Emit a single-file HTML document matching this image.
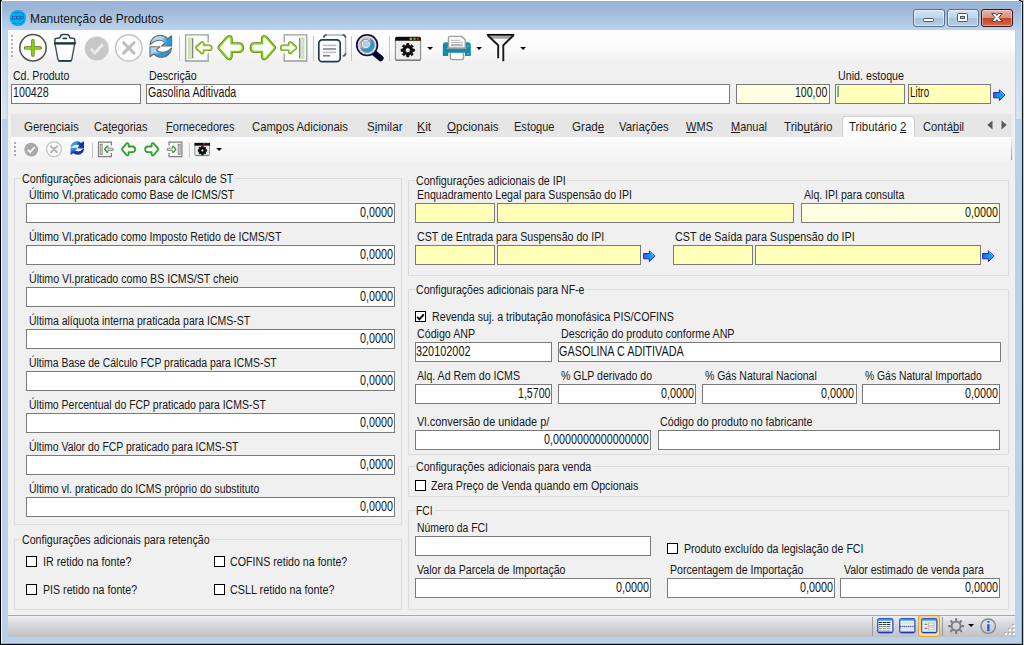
<!DOCTYPE html>
<html lang="pt-BR"><head><meta charset="utf-8"><title>Manutenção de Produtos</title>
<style>
html,body{margin:0;padding:0}
body{width:1024px;height:645px;overflow:hidden;background:#b9d1ea;position:relative;font-family:"Liberation Sans",sans-serif}
#w{position:absolute;left:0;top:0;width:1024px;height:645px;overflow:hidden;background:#b9d1ea}
#w>*{position:absolute}
#tb{left:0;top:0;width:1024px;height:30px;background:linear-gradient(#98b3d4 0,#9cb6d7 8px,#b0c9e6 22px,#bdd3ec 30px)}
#topline{left:2px;top:0;width:1017px;height:1px;background:#fdfdfd}
#c1{left:1019px;top:0;width:2px;height:1px;background:#111}
#c2{left:1021px;top:1px;width:1px;height:1px;background:#111}
#c3{left:0;top:0;width:2px;height:1px;background:#222}
#lblack{left:0;top:0;width:1px;height:645px;background:#000}
#lwhite{left:1px;top:2px;width:1px;height:641px;background:#f4f8fc}
#rcyan{left:1021px;top:2px;width:1px;height:641px;background:linear-gradient(#a8eefb,#7fe4f8 40%,#45dcf8)}
#rblack{left:1022px;top:1px;width:1px;height:644px;background:#10181c}
#rgray{left:1023px;top:0;width:1px;height:645px;background:#c6c6c6}
#bcyan{left:1px;top:643px;width:1021px;height:1px;background:#35d6f0}
#bblack{left:0;top:644px;width:1023px;height:1px;background:#000}
#refl1{left:2px;top:30px;width:5px;height:89px;background:linear-gradient(rgba(255,255,255,.08),rgba(255,255,255,.42))}
#refl2{left:1016px;top:30px;width:5px;height:89px;background:linear-gradient(rgba(255,255,255,.08),rgba(255,255,255,.42))}
#client{left:8px;top:30px;width:1007px;height:607px;background:#f0f0f0}
#toolbar{left:8px;top:30px;width:1007px;height:34px;background:linear-gradient(#f6f6f6 0,#fefefe 2px,#fcfcfc 45%,#f4f4f4 80%,#f0f0f0 100%)}
.wb{top:9px;height:16px;border:1px solid #5d6f8a;border-radius:3px;background:linear-gradient(#cfe0f3 0,#c0d5ee 48%,#a8c2e0 52%,#b5cde9 100%);box-shadow:inset 0 0 0 1px rgba(255,255,255,.55)}
.wb.cl{border-color:#43141a;background:linear-gradient(#eab0a2 0,#dd8f7e 48%,#c44528 52%,#cf6a4b 100%);box-shadow:inset 0 0 0 1px rgba(255,255,255,.4)}
.wb svg{position:absolute;left:0;top:0}
.t{white-space:nowrap;color:#161616;transform-origin:0 0}
.s12_5{font-size:12.5px;line-height:14px}
.s13_5{font-size:13.5px;line-height:16px}
.s14{font-size:14px;line-height:16px}
.t u{text-decoration:underline;text-underline-offset:1px}
.bx{border:1px solid #7a7a7a}
.gb{border:1px solid #dcdcdc;border-radius:1px;box-sizing:border-box;width:0;height:0}
.gt{height:4px;background:#f0f0f0}
.cb{width:9px;height:9px;border:1px solid #000;background:#fff}
.cb svg{position:absolute;left:0;top:0}
.sep{width:1px;background:#c8c8c8}
.ic{overflow:visible}
#tabstrip{left:11px;top:114px;width:1001px;height:23px;background:#e6e6e6}
#acttab{left:842px;top:116px;width:71px;height:21px;border:1px solid #d0d0d0;border-bottom:none;border-radius:4px 4px 0 0;background:linear-gradient(#fff,#fafafa)}
#itb{left:11px;top:137px;width:1000px;height:24px;background:linear-gradient(#fcfcfc,#f3f3f3);border-radius:0 0 0 4px}
#itbr{left:1011px;top:138px;width:1px;height:22px;background:linear-gradient(#f0f0f0,#9a9a9a)}
#status{left:8px;top:615px;width:1007px;height:22px;background:linear-gradient(#a7a9ad 0,#a7a9ad 1px,#eceef0 1px,#d8dadd 40%,#bfc1c4 100%)}
#stsel{left:918px;top:615px;width:20px;height:20px;border:1px solid #e6a23c;border-top-color:#d8913a;border-radius:3px;background:linear-gradient(#fcd67e,#fde08e)}
</style></head>
<body><div id="w">
<div id="tb"></div>
<div id="c1"></div><div id="c2"></div><div id="c3"></div>
<div id="topline"></div><div id="lblack"></div><div id="lwhite"></div>
<div id="rcyan"></div><div id="rblack"></div><div id="rgray"></div>
<div id="bcyan"></div><div id="bblack"></div>
<div id="refl1"></div><div id="refl2"></div>
<div id="client"></div>
<div id="toolbar"></div>
<div class="wb" style="left:913px;width:30px"><svg width="30" height="16" viewBox="0 0 30 16"><rect x="9.5" y="8.5" width="10" height="3" rx="0.8" fill="#fff" stroke="#535666" stroke-width="1"/></svg></div>
<div class="wb" style="left:947px;width:30px"><svg width="30" height="16" viewBox="0 0 30 16"><rect x="9.5" y="3.5" width="10" height="8" rx="1" fill="#fff" stroke="#535666" stroke-width="1"/><rect x="12.5" y="6.5" width="4" height="2" fill="#a9c0dc" stroke="#535666" stroke-width="1"/></svg></div>
<div class="wb cl" style="left:981px;width:30px"><svg width="30" height="16" viewBox="0.6 0 30 16"><path d="M10.3 3.5 L14 3.5 L15.5 5.4 L17 3.5 L20.7 3.5 L17.5 7.5 L20.7 11.5 L17 11.5 L15.5 9.6 L14 11.5 L10.3 11.5 L13.5 7.5 Z" fill="#fff" stroke="#4d4a5c" stroke-width="1" stroke-linejoin="round"/></svg></div>
<svg class="ic" style="left:9px;top:10px" width="18" height="17" viewBox="0 0 18 17"><circle cx="8.9" cy="8.1" r="8.2" fill="#08aef0"/>
<path d="M3.8 2.7 H11.4 A3.6 3.6 0 0 1 15 6.1 M14.6 10.6 A3.6 3.6 0 0 1 11.2 13.4 H3.8" fill="none" stroke="#1a80cc" stroke-width="1"/>
<text x="2.3" y="10.1" font-family="Liberation Sans, sans-serif" font-size="5.8" font-weight="bold" font-style="italic" fill="#1560b4" textLength="12.6" lengthAdjust="spacingAndGlyphs">ERP</text></svg>
<span class="t s13_5" style="left:29.70px;top:10.52px;transform:scaleX(0.8863)">Manutenção de Produtos</span>
<svg class="ic" style="left:11px;top:35px" width="3" height="23" viewBox="0 0 3 23"><rect x="0" y="0" width="2" height="2" fill="#b4b4b4"/><rect x="0" y="4" width="2" height="2" fill="#b4b4b4"/><rect x="0" y="8" width="2" height="2" fill="#b4b4b4"/><rect x="0" y="12" width="2" height="2" fill="#b4b4b4"/><rect x="0" y="16" width="2" height="2" fill="#b4b4b4"/><rect x="0" y="20" width="2" height="2" fill="#b4b4b4"/></svg>
<svg class="ic" style="left:18px;top:33px" width="30" height="30" viewBox="0 0 30 30"><circle cx="15" cy="14.8" r="13.2" fill="#fcfcfc" stroke="#505050" stroke-width="1.5"/>
<path d="M7.6 14.9 H22.2 M14.9 7.6 V22.2" stroke="#55701a" stroke-width="3.3" stroke-linecap="round" fill="none"/>
<path d="M7.8 14.9 H22 M14.9 7.8 V22" stroke="#8ed000" stroke-width="2" stroke-linecap="round" fill="none"/></svg>
<svg class="ic" style="left:52px;top:33px" width="26" height="30" viewBox="0 0 26 30"><path d="M3 10.8 L5.9 26.3 Q6.2 27.8 7.8 27.8 H17.9 Q19.5 27.8 19.8 26.3 L22.7 10.8 Z" fill="#fdfdfd" stroke="#40545f" stroke-width="1.4"/>
<path d="M6.9 27.8 H18.8" stroke="#1d3644" stroke-width="1.7" stroke-linecap="round"/>
<path d="M2.8 10.3 V7.4 Q2.8 5.3 5 5.3 H6.4 Q8 5.3 8.2 3.9 Q8.6 1.5 11 1.5 H14.7 Q17.1 1.5 17.5 3.9 Q17.7 5.3 19.3 5.3 H20.7 Q22.9 5.3 22.9 7.4 V10.3 Z" fill="#fdfdfd" stroke="#2b4350" stroke-width="1.4"/>
<path d="M10.6 5.4 H15.1" stroke="#1d3644" stroke-width="1.6"/>
<path d="M2.1 10.3 H23.6" stroke="#1a3442" stroke-width="2"/></svg>
<svg class="ic" style="left:84px;top:36px" width="26" height="26" viewBox="0 0 26 26"><circle cx="12.8" cy="12.4" r="12" fill="#c8c8c8"/>
<path d="M6.8 12.8 L11 17 L19 8.2" fill="none" stroke="#ececec" stroke-width="2.8"/></svg>
<svg class="ic" style="left:114px;top:33px" width="30" height="30" viewBox="0 0 30 30"><circle cx="14.8" cy="14.9" r="13.2" fill="#fcfcfc" stroke="#c4c4c4" stroke-width="1.5"/>
<path d="M9.6 9.7 L20 20.1 M20 9.7 L9.6 20.1" stroke="#bdbdbd" stroke-width="3" stroke-linecap="round" fill="none"/></svg>
<svg class="ic" style="left:148px;top:34px" width="26" height="26" viewBox="0 0 26 26"><defs>
<linearGradient id="rg1b" x1="0" y1="0" x2="1" y2="0"><stop offset="0" stop-color="#b4d3f2"/><stop offset="0.55" stop-color="#b4d3f2"/><stop offset="0.8" stop-color="#1e9ddb"/><stop offset="1" stop-color="#1e9ddb"/></linearGradient>
<linearGradient id="rg2b" x1="0" y1="0" x2="0.6" y2="1"><stop offset="0" stop-color="#b4d3f2"/><stop offset="0.45" stop-color="#b4d3f2"/><stop offset="0.7" stop-color="#1e9ddb"/><stop offset="1" stop-color="#1e9ddb"/></linearGradient>
</defs>
<g transform="scale(1)">
<path d="M2 10.8 C2.5 5 7 1.4 12 1.4 C15.5 1.4 18 2.8 19.6 4.8 L23.6 1.8 L23.6 12 L13.6 12 L17.2 9 C15.9 7.4 14 6.3 11.6 6.3 C8 6.3 4.6 8.2 2 10.8 Z" fill="url(#rg1b)" stroke="#6a6a6a" stroke-width="1.1" stroke-linejoin="round"/>
<path d="M23.6 13.9 C23.1 19.7 18.6 23.3 13.6 23.3 C10.1 23.3 7.6 21.9 6 19.9 L2 22.9 L2 12.8 L12 12.8 L8.4 15.8 C9.7 17.4 11.6 18.4 14 18.4 C17.6 18.4 21 16.5 23.6 13.9 Z" fill="url(#rg2b)" stroke="#6a6a6a" stroke-width="1.1" stroke-linejoin="round"/>
</g></svg>
<div class="sep" style="left:179px;top:36px;height:25px"></div>
<svg class="ic" style="left:184px;top:33px" width="30" height="30" viewBox="0 0 30 30"><path d="M24.2 9.4 V1.8 H1.6 V28 H24.2 V20.4" fill="#fbfbfb" stroke="#949ea7" stroke-width="1.3"/>
<rect x="4.6" y="5.2" width="4" height="20" fill="#dedede" stroke="#bce694" stroke-width="1.2"/>
<path d="M8.7 5.4 V25" stroke="#707070" stroke-width="1"/>
<path d="M12.6 13.9 L17.2 9.9 Q18.4 9 19 9.8 Q19.4 10.2 19.4 11 L19.4 12.5 L25.2 12.5 Q27.4 12.5 27.4 14.75 Q27.4 17 25.2 17 L19.4 17 L19.4 18.4 Q19.4 19.2 19 19.6 Q18.4 20.4 17.2 19.5 L12.6 15.5 Q11.8 14.7 12.6 13.9 Z" fill="#fdfdfd" stroke="#647434" stroke-width="2.2" stroke-linejoin="round"/>
<path d="M12.6 13.9 L17.2 9.9 Q18.4 9 19 9.8 Q19.4 10.2 19.4 11 L19.4 12.5 L25.2 12.5 Q27.4 12.5 27.4 14.75 Q27.4 17 25.2 17 L19.4 17 L19.4 18.4 Q19.4 19.2 19 19.6 Q18.4 20.4 17.2 19.5 L12.6 15.5 Q11.8 14.7 12.6 13.9 Z" fill="#fdfdfd" stroke="#8ad21a" stroke-width="1.3" stroke-linejoin="round"/></svg>
<svg class="ic" style="left:216px;top:34px" width="30" height="28" viewBox="0 0 30 28"><path d="M3.6 12.5 L11.4 3.5 Q13 1.8 14.5 3 Q15.2 3.6 15.2 5 L15.2 9.7 L22.4 9.7 Q26.5 9.7 26.5 13.65 Q26.5 17.6 22.4 17.6 L15.2 17.6 L15.2 22.3 Q15.2 23.7 14.5 24.3 Q13 25.5 11.4 23.8 L3.6 14.8 Q2.6 13.65 3.6 12.5 Z" fill="#fdfdfd" stroke="#5d6e2c" stroke-width="3" stroke-linejoin="round"/>
<path d="M3.6 12.5 L11.4 3.5 Q13 1.8 14.5 3 Q15.2 3.6 15.2 5 L15.2 9.7 L22.4 9.7 Q26.5 9.7 26.5 13.65 Q26.5 17.6 22.4 17.6 L15.2 17.6 L15.2 22.3 Q15.2 23.7 14.5 24.3 Q13 25.5 11.4 23.8 L3.6 14.8 Q2.6 13.65 3.6 12.5 Z" fill="#fdfdfd" stroke="#86cf14" stroke-width="1.8" stroke-linejoin="round"/></svg>
<svg class="ic" style="left:248px;top:34px" width="30" height="28" viewBox="0 0 30 28"><g transform="translate(29.6,0) scale(-1,1)">
<path d="M3.6 12.5 L11.4 3.5 Q13 1.8 14.5 3 Q15.2 3.6 15.2 5 L15.2 9.7 L22.4 9.7 Q26.5 9.7 26.5 13.65 Q26.5 17.6 22.4 17.6 L15.2 17.6 L15.2 22.3 Q15.2 23.7 14.5 24.3 Q13 25.5 11.4 23.8 L3.6 14.8 Q2.6 13.65 3.6 12.5 Z" fill="#fdfdfd" stroke="#5d6e2c" stroke-width="3" stroke-linejoin="round"/>
<path d="M3.6 12.5 L11.4 3.5 Q13 1.8 14.5 3 Q15.2 3.6 15.2 5 L15.2 9.7 L22.4 9.7 Q26.5 9.7 26.5 13.65 Q26.5 17.6 22.4 17.6 L15.2 17.6 L15.2 22.3 Q15.2 23.7 14.5 24.3 Q13 25.5 11.4 23.8 L3.6 14.8 Q2.6 13.65 3.6 12.5 Z" fill="#fdfdfd" stroke="#86cf14" stroke-width="1.8" stroke-linejoin="round"/>
</g></svg>
<svg class="ic" style="left:279px;top:33px" width="30" height="30" viewBox="0 0 30 30"><g transform="translate(29.4,0) scale(-1,1)">
<path d="M24.2 9.4 V1.8 H1.6 V28 H24.2 V20.4" fill="#fbfbfb" stroke="#949ea7" stroke-width="1.3"/>
<rect x="4.6" y="5.2" width="4" height="20" fill="#dedede" stroke="#bce694" stroke-width="1.2"/>
<path d="M8.7 5.4 V25" stroke="#707070" stroke-width="1"/>
<path d="M12.6 13.9 L17.2 9.9 Q18.4 9 19 9.8 Q19.4 10.2 19.4 11 L19.4 12.5 L25.2 12.5 Q27.4 12.5 27.4 14.75 Q27.4 17 25.2 17 L19.4 17 L19.4 18.4 Q19.4 19.2 19 19.6 Q18.4 20.4 17.2 19.5 L12.6 15.5 Q11.8 14.7 12.6 13.9 Z" fill="#fdfdfd" stroke="#647434" stroke-width="2.2" stroke-linejoin="round"/>
<path d="M12.6 13.9 L17.2 9.9 Q18.4 9 19 9.8 Q19.4 10.2 19.4 11 L19.4 12.5 L25.2 12.5 Q27.4 12.5 27.4 14.75 Q27.4 17 25.2 17 L19.4 17 L19.4 18.4 Q19.4 19.2 19 19.6 Q18.4 20.4 17.2 19.5 L12.6 15.5 Q11.8 14.7 12.6 13.9 Z" fill="#fdfdfd" stroke="#8ad21a" stroke-width="1.3" stroke-linejoin="round"/>
</g></svg>
<div class="sep" style="left:313px;top:36px;height:25px"></div>
<svg class="ic" style="left:317px;top:33px" width="30" height="30" viewBox="0 0 30 30"><path d="M6.6 5 Q6.6 1.9 9.6 1.9 H25.6 Q28.6 1.9 28.6 5 V20 Q28.6 23 25.6 23" fill="none" stroke="#a9b3ba" stroke-width="1.5"/>
<path d="M6.7 4.6 Q6.9 2 9.6 1.9 M25.6 1.9 Q28.4 2 28.6 4.8 M28.6 20.2 Q28.4 22.8 25.8 23" fill="none" stroke="#555a5e" stroke-width="1.6"/>
<rect x="1.8" y="6.8" width="21.4" height="21.8" rx="3.4" fill="#fbfbfb" stroke="#243c4a" stroke-width="1.7"/>
<path d="M6 12.4 H19" stroke="#b5c0c8" stroke-width="1.5"/>
<path d="M6 16 H19" stroke="#6c7378" stroke-width="1.4"/>
<path d="M6 19.4 H19" stroke="#b5c0c8" stroke-width="1.5"/>
<path d="M6 22.8 H13.2" stroke="#6c7378" stroke-width="1.4"/></svg>
<div class="sep" style="left:351px;top:36px;height:25px"></div>
<svg class="ic" style="left:355px;top:33px" width="30" height="30" viewBox="0 0 30 30"><defs><clipPath id="scp"><circle cx="12.1" cy="12.1" r="7.5"/></clipPath></defs>
<path d="M19.6 20.2 L25.6 25.2" stroke="#05052e" stroke-width="6" stroke-linecap="round"/>
<circle cx="12.1" cy="12.1" r="10.4" fill="#c2c2c2" stroke="#0a0a3a" stroke-width="1.6"/>
<circle cx="12.1" cy="12.1" r="8.1" fill="none" stroke="#f2f2f2" stroke-width="1.3"/>
<circle cx="12.1" cy="12.1" r="7.5" fill="#dcdce0"/>
<g clip-path="url(#scp)">
<path d="M4 13.6 Q7 16.4 11.4 15.6 Q15.4 14.6 15.8 10.4 Q16 8 14.6 6 L21 5 V21 H4 Z" fill="#1e9cd8"/>
<circle cx="10.8" cy="11" r="4.7" fill="#e6e6ea" stroke="#8e8e92" stroke-width="1.1"/>
<path d="M8 8 H13.8 V13.6 H11.6 L10.4 14.8 L10.2 13.6 H8 Z" fill="#a9d2f2"/>
</g>
<circle cx="12.1" cy="12.1" r="7.5" fill="none" stroke="#9a9a9a" stroke-width="0.7"/></svg>
<div class="sep" style="left:389px;top:36px;height:25px"></div>
<svg class="ic" style="left:394px;top:35px" width="28" height="27" viewBox="0 0 28 27"><path d="M1.4 3.4 Q1.4 2 3 2 H25 Q26.6 2 26.6 3.4 V23.2 Q26.6 25.4 24.4 25.4 H3.6 Q1.4 25.4 1.4 23.2 Z" fill="#eceeee" stroke="#8e8e8e" stroke-width="1.1"/>
<path d="M2.4 25.3 H25.6" stroke="#7c7c7c" stroke-width="1.5" stroke-linecap="round"/>
<path d="M1.2 5.7 V3.4 Q1.2 1.9 2.9 1.9 H25.1 Q26.8 1.9 26.8 3.4 V5.7 Z" fill="#0b0b0b"/>
<circle cx="16.9" cy="3.8" r="1.35" fill="#f39a1d"/><circle cx="20.5" cy="3.8" r="1.35" fill="#2fbf3a"/><circle cx="24" cy="3.8" r="1.35" fill="#e8191f"/>
<path d="M18.65 13.99 L20.52 14.19 L20.52 16.21 L18.65 16.41 L18.08 17.78 L19.27 19.24 L17.84 20.67 L16.38 19.48 L15.01 20.05 L14.81 21.92 L12.79 21.92 L12.59 20.05 L11.22 19.48 L9.76 20.67 L8.33 19.24 L9.52 17.78 L8.95 16.41 L7.08 16.21 L7.08 14.19 L8.95 13.99 L9.52 12.62 L8.33 11.16 L9.76 9.73 L11.22 10.92 L12.59 10.35 L12.79 8.48 L14.81 8.48 L15.01 10.35 L16.38 10.92 L17.84 9.73 L19.27 11.16 L18.08 12.62 Z M16.30 15.20 A2.5 2.5 0 1 0 11.30 15.20 A2.5 2.5 0 1 0 16.30 15.20 Z" fill="#0d0d0d" fill-rule="evenodd" stroke="#0d0d0d" stroke-width="0.8" stroke-linejoin="round"/></svg>
<svg class="ic" style="left:427px;top:47px" width="7" height="4" viewBox="0 0 7 4"><path d="M0.2 0 H6 L3.1 3.1 Z" fill="#000"/></svg>
<svg class="ic" style="left:442px;top:35px" width="30" height="26" viewBox="0 0 30 26"><path d="M0.8 10.6 Q0.8 7.3 4.1 7.3 H25.5 Q28.8 7.3 28.8 10.6 V21.1 H23 V17.8 H6.2 V21.1 H0.8 Z" fill="#118ca6"/>
<path d="M6.5 13.2 V2.8 Q6.5 1.4 7.9 1.4 H19.4 L23.3 4.8 V13.2 Z" fill="#fbfbfb" stroke="#a2a2a2" stroke-width="1.4" stroke-linejoin="round"/>
<path d="M9 5.3 H18 M9 7.5 H20.6" stroke="#b0b0b0" stroke-width="0.9"/>
<path d="M9 9.9 H20.6" stroke="#b4b4b4" stroke-width="2"/>
<path d="M9 12 H20.6" stroke="#c4c4c4" stroke-width="0.8"/>
<path d="M5 13.4 H24.6" stroke="#929ca2" stroke-width="1.4"/>
<rect x="25" y="10.4" width="2.2" height="1.5" fill="#8aa4ae"/>
<rect x="25" y="18.3" width="2.2" height="1.2" fill="#8aa4ae"/>
<path d="M8.3 18 V22.6 Q8.3 24.6 10.3 24.6 H19.5 Q21.5 24.6 21.5 22.6 V18" fill="#fcfcfc" stroke="#9c9c9c" stroke-width="1.4"/></svg>
<svg class="ic" style="left:476px;top:47px" width="7" height="4" viewBox="0 0 7 4"><path d="M0.2 0 H6 L3.1 3.1 Z" fill="#000"/></svg>
<svg class="ic" style="left:486px;top:33px" width="30" height="30" viewBox="0 0 30 30"><path d="M1.4 1.8 H28 L17.6 12 V28 L12.2 25 V12 Z" fill="#fdfdfd"/>
<path d="M2.6 2.4 H26.8 L23.6 5.7 H5.8 Z" fill="#a2a2a2"/>
<path d="M0.9 1.8 H28.3" stroke="#000" stroke-width="1.7"/>
<path d="M1.6 2.2 L12.2 12.2 V25.2" fill="none" stroke="#1a1a1a" stroke-width="1.9"/>
<path d="M27.6 2.2 L17.3 12.2 V28.2" fill="none" stroke="#1a1a1a" stroke-width="1.9"/></svg>
<svg class="ic" style="left:520px;top:47px" width="7" height="4" viewBox="0 0 7 4"><path d="M0.2 0 H6 L3.1 3.1 Z" fill="#000"/></svg>
<span class="t s12_5" style="left:13.00px;top:68.67px;transform:scaleX(0.8438)">Cd. Produto</span>
<span class="t s12_5" style="left:148.90px;top:68.67px;transform:scaleX(0.8592)">Descrição</span>
<span class="t s12_5" style="left:838.40px;top:68.67px;transform:scaleX(0.8556)">Unid. estoque</span>
<div class="bx" style="left:11px;top:84px;width:128px;height:18px;background:#fff;border-color:#7a7a7a"></div>
<div class="bx" style="left:146px;top:84px;width:582px;height:18px;background:#fff;border-color:#7a7a7a"></div>
<div class="bx" style="left:736px;top:84px;width:92px;height:18px;background:#ffffe1;border-color:#7a7a7a"></div>
<div class="bx" style="left:835px;top:84px;width:68px;height:18px;background:#ffffb9;border-color:#7a7a7a"></div>
<div class="bx" style="left:908px;top:84px;width:81px;height:18px;background:#ffffb9;border-color:#7a7a7a"></div>
<span class="t s14" style="left:13.30px;top:84.35px;transform:scaleX(0.7641)">100428</span>
<span class="t s14" style="left:147.65px;top:84.35px;transform:scaleX(0.7610)">Gasolina Aditivada</span>
<span class="t s14" style="left:795.20px;top:84.35px;transform:scaleX(0.7542)">100,00</span>
<span class="t s14" style="left:836.70px;top:84.35px;transform:scaleX(0.6400)">l</span>
<span class="t s14" style="left:910.30px;top:84.35px;transform:scaleX(0.7013)">Litro</span>
<svg class="ic" style="left:993px;top:88.6px" width="13" height="13" viewBox="0 0 13 13"><defs><linearGradient id="bag" x1="0" y1="0" x2="1" y2="0.3"><stop offset="0" stop-color="#2a55e6"/><stop offset="0.45" stop-color="#1c8ae8"/><stop offset="1" stop-color="#19b0f2"/></linearGradient></defs>
<path d="M0.7 3.5 H6.4 V0.9 L12 6.1 L6.4 11.5 V8.8 H0.7 Z" fill="url(#bag)" stroke="#1a22cc" stroke-width="1" stroke-linejoin="round"/>
<path d="M6.9 2.2 L11.2 6.1" stroke="#55b8f6" stroke-width="1" fill="none"/></svg>
<div id="tabstrip"></div>
<div id="acttab"></div>
<div id="itb"></div><div id="itbr"></div>
<span class="t s13_5" style="left:23.65px;top:118.92px;transform:scaleX(0.8484);color:#1e1e1e">Gere<u>n</u>ciais</span>
<span class="t s13_5" style="left:94.40px;top:118.92px;transform:scaleX(0.8193);color:#1e1e1e">Ca<u>t</u>egorias</span>
<span class="t s13_5" style="left:166.15px;top:118.92px;transform:scaleX(0.8224);color:#1e1e1e"><u>F</u>ornecedores</span>
<span class="t s13_5" style="left:252.40px;top:118.92px;transform:scaleX(0.8361);color:#1e1e1e">Cam<u>p</u>os Adicionais</span>
<span class="t s13_5" style="left:366.90px;top:118.92px;transform:scaleX(0.8603);color:#1e1e1e">S<u>i</u>milar</span>
<span class="t s13_5" style="left:417.40px;top:118.92px;transform:scaleX(0.9039);color:#1e1e1e"><u>K</u>it</span>
<span class="t s13_5" style="left:446.90px;top:118.92px;transform:scaleX(0.8577);color:#1e1e1e"><u>O</u>pcionais</span>
<span class="t s13_5" style="left:514.40px;top:118.92px;transform:scaleX(0.8174);color:#1e1e1e">Esto<u>q</u>ue</span>
<span class="t s13_5" style="left:571.90px;top:118.92px;transform:scaleX(0.8593);color:#1e1e1e">Grad<u>e</u></span>
<span class="t s13_5" style="left:619.40px;top:118.92px;transform:scaleX(0.8428);color:#1e1e1e">Variações</span>
<span class="t s13_5" style="left:686.40px;top:118.92px;transform:scaleX(0.8182);color:#1e1e1e"><u>W</u>MS</span>
<span class="t s13_5" style="left:730.65px;top:118.92px;transform:scaleX(0.8130);color:#1e1e1e"><u>M</u>anual</span>
<span class="t s13_5" style="left:784.40px;top:118.92px;transform:scaleX(0.8579);color:#1e1e1e">Trib<u>u</u>tário</span>
<span class="t s13_5" style="left:849.40px;top:118.92px;transform:scaleX(0.8446);color:#1e1e1e">Tributário <u>2</u></span>
<span class="t s13_5" style="left:922.90px;top:118.92px;transform:scaleX(0.8298);color:#1e1e1e">Contá<u>b</u>il</span>
<svg class="ic" style="left:986px;top:120px" width="22" height="11" viewBox="0 0 22 11"><path d="M6.5 0.5 L6.5 9.5 L1.3 5 Z M15.5 0.5 L15.5 9.5 L20.7 5 Z" fill="#5a5a5a"/></svg>
<svg class="ic" style="left:14.4px;top:142px" width="3" height="15" viewBox="0 0 3 15"><rect x="0" y="0" width="2" height="2" fill="#aaaaaa"/><rect x="0" y="4" width="2" height="2" fill="#aaaaaa"/><rect x="0" y="8" width="2" height="2" fill="#aaaaaa"/><rect x="0" y="12" width="2" height="2" fill="#aaaaaa"/></svg>
<svg class="ic" style="left:24px;top:142px" width="15" height="15" viewBox="0 0 15 15"><circle cx="7.2" cy="7.6" r="6.9" fill="#a9a9a9"/>
<path d="M3.8 7.8 L6.2 10.2 L10.8 5.2" fill="none" stroke="#f6f6f6" stroke-width="1.7"/></svg>
<svg class="ic" style="left:46px;top:141px" width="17" height="17" viewBox="0 0 17 17"><circle cx="8" cy="8.3" r="7.4" fill="#fcfcfc" stroke="#c2c2c2" stroke-width="1.3"/>
<path d="M5 5.3 L11 11.3 M11 5.3 L5 11.3" stroke="#b4b4b4" stroke-width="2" stroke-linecap="round"/></svg>
<svg class="ic" style="left:70px;top:141.3px" width="16" height="16" viewBox="0 0 16 16"><defs>
<linearGradient id="rs1" x1="0" y1="0" x2="1" y2="0"><stop offset="0" stop-color="#49a9ee"/><stop offset="0.45" stop-color="#2f8fe2"/><stop offset="0.75" stop-color="#1230a8"/><stop offset="1" stop-color="#1230a8"/></linearGradient>
<linearGradient id="rs2" x1="0" y1="0" x2="0.6" y2="1"><stop offset="0" stop-color="#3c9ee8"/><stop offset="0.35" stop-color="#2a78d4"/><stop offset="0.6" stop-color="#1230a8"/><stop offset="1" stop-color="#1230a8"/></linearGradient>
</defs>
<g transform="scale(0.57)">
<path d="M2 10.5 C2.5 5 7 1.4 12 1.4 C15.5 1.4 18 2.8 19.6 4.8 L23.6 1.8 L23.6 12 L14 12 L17.4 8.4 C16 6.6 14 5.4 11.6 5.4 C7.6 5.4 4.2 7.6 2 10.5 Z" fill="url(#rs1)" stroke="url(#rs1)" stroke-width="2" stroke-linejoin="round"/>
<path d="M23.6 14.2 C23.1 19.7 18.6 23.3 13.6 23.3 C10.1 23.3 7.6 21.9 6 19.9 L2 22.9 L2 12.8 L11.6 12.8 L8.2 16.3 C9.6 18.1 11.6 19.3 14 19.3 C18 19.3 21.4 17.1 23.6 14.2 Z" fill="url(#rs2)" stroke="url(#rs2)" stroke-width="2" stroke-linejoin="round"/>
</g></svg>
<div class="sep" style="left:92px;top:143px;height:15px;background:#c4c4c4"></div>
<svg class="ic" style="left:97px;top:141px" width="18" height="17" viewBox="0 0 18 17"><path d="M14.4 4.4 V1.2 H1.5 V15.6 H14.4 V11.9" fill="#f6f6f6" stroke="#7e7e7e" stroke-width="1.2"/>
<rect x="3.3" y="3.3" width="1.9" height="10.2" fill="#dcdcdc" stroke="#858585" stroke-width="0.9"/>
<path d="M7.6 8.3 L10.2 5.2 L11 5.6 L11 7.3 L15.2 7.3 Q16.4 7.3 16.4 8.35 Q16.4 9.4 15.2 9.4 L11 9.4 L11 11 L10.2 11.4 Z" fill="#fdfdfd" stroke="#8a8f8a" stroke-width="1.1" stroke-linejoin="round"/>
<path d="M11 5.6 L10.2 5.2 L7.6 8.3 L10.2 11.4 L11 11" fill="none" stroke="#3aa03a" stroke-width="1.2" stroke-linejoin="round"/></svg>
<svg class="ic" style="left:120px;top:141px" width="17" height="17" viewBox="0 0 17 17"><path d="M2.2 7.7 L6.4 2.7 Q7.4 1.6 8.2 2.4 Q8.6 2.8 8.6 3.6 L8.6 5.5 L12.4 5.5 Q15.1 5.5 15.1 8.3 Q15.1 11.1 12.4 11.1 L8.6 11.1 L8.6 13 Q8.6 13.8 8.2 14.2 Q7.4 15 6.4 13.9 L2.2 8.9 Q1.7 8.3 2.2 7.7 Z" fill="#fdfdfd" stroke="#2da32d" stroke-width="1.8" stroke-linejoin="round"/></svg>
<svg class="ic" style="left:143px;top:141px" width="17" height="17" viewBox="0 0 17 17"><g transform="translate(17.25,0) scale(-1,1)"><path d="M2.2 7.7 L6.4 2.7 Q7.4 1.6 8.2 2.4 Q8.6 2.8 8.6 3.6 L8.6 5.5 L12.4 5.5 Q15.1 5.5 15.1 8.3 Q15.1 11.1 12.4 11.1 L8.6 11.1 L8.6 13 Q8.6 13.8 8.2 14.2 Q7.4 15 6.4 13.9 L2.2 8.9 Q1.7 8.3 2.2 7.7 Z" fill="#fdfdfd" stroke="#2da32d" stroke-width="1.8" stroke-linejoin="round"/></g></svg>
<svg class="ic" style="left:166px;top:141px" width="18" height="17" viewBox="0 0 18 17"><g transform="translate(17.4,0) scale(-1,1)">
<path d="M14.4 4.4 V1.2 H1.5 V15.6 H14.4 V11.9" fill="#f6f6f6" stroke="#7e7e7e" stroke-width="1.2"/>
<rect x="3.3" y="3.3" width="1.9" height="10.2" fill="#dcdcdc" stroke="#858585" stroke-width="0.9"/>
<path d="M7.6 8.3 L10.2 5.2 L11 5.6 L11 7.3 L15.2 7.3 Q16.4 7.3 16.4 8.35 Q16.4 9.4 15.2 9.4 L11 9.4 L11 11 L10.2 11.4 Z" fill="#fdfdfd" stroke="#8a8f8a" stroke-width="1.1" stroke-linejoin="round"/>
<path d="M11 5.6 L10.2 5.2 L7.6 8.3 L10.2 11.4 L11 11" fill="none" stroke="#3aa03a" stroke-width="1.2" stroke-linejoin="round"/>
</g></svg>
<div class="sep" style="left:189px;top:143px;height:15px;background:#cdcdcd"></div>
<svg class="ic" style="left:194px;top:142px" width="17" height="15" viewBox="0 0 17 15"><path d="M0.9 1.4 H15.5 V12.4 Q15.5 13.6 14.3 13.6 H2.1 Q0.9 13.6 0.9 12.4 Z" fill="#e9eef0" stroke="#8a8a8a" stroke-width="0.9"/>
<path d="M1.4 13.4 H15" stroke="#707070" stroke-width="0.9"/>
<rect x="0.5" y="0.9" width="15.5" height="2.8" fill="#0c0c0c"/>
<rect x="9.2" y="1.2" width="2" height="1.3" fill="#d8202a"/><rect x="13" y="1.2" width="1.6" height="1.3" fill="#b81820"/>
<path d="M11.80 7.66 L12.74 7.78 L12.74 9.22 L11.80 9.34 L11.40 10.31 L11.98 11.06 L10.96 12.08 L10.21 11.50 L9.24 11.90 L9.12 12.84 L7.68 12.84 L7.56 11.90 L6.59 11.50 L5.84 12.08 L4.82 11.06 L5.40 10.31 L5.00 9.34 L4.06 9.22 L4.06 7.78 L5.00 7.66 L5.40 6.69 L4.82 5.94 L5.84 4.92 L6.59 5.50 L7.56 5.10 L7.68 4.16 L9.12 4.16 L9.24 5.10 L10.21 5.50 L10.96 4.92 L11.98 5.94 L11.40 6.69 Z M9.80 8.50 A1.4 1.4 0 1 0 7.00 8.50 A1.4 1.4 0 1 0 9.80 8.50 Z" fill="#0a0a0a" fill-rule="evenodd" stroke="#0a0a0a" stroke-width="0.8" stroke-linejoin="round"/></svg>
<svg class="ic" style="left:216px;top:148px" width="7" height="4" viewBox="0 0 7 4"><path d="M0.2 0 H6 L3.1 3.1 Z" fill="#000"/></svg>
<div class="gb" style="left:14px;top:178px;width:388px;height:347px"></div>
<div class="gt" style="left:21.1px;top:176px;width:213.9px"></div>
<span class="t s12_5" style="left:22.00px;top:172.07px;transform:scaleX(0.8546)">Configurações adicionais para cálculo de ST</span>
<span class="t s12_5" style="left:29.40px;top:188.17px;transform:scaleX(0.8466)">Último Vl.praticado como Base de ICMS/ST</span>
<div class="bx" style="left:26px;top:203px;width:367px;height:18px;background:#fff;border-color:#7a7a7a"></div>
<span class="t s14" style="left:359.85px;top:203.75px;transform:scaleX(0.7705)">0,0000</span>
<span class="t s12_5" style="left:29.40px;top:230.17px;transform:scaleX(0.8469)">Último Vl.praticado como Imposto Retido de ICMS/ST</span>
<div class="bx" style="left:26px;top:245px;width:367px;height:18px;background:#fff;border-color:#7a7a7a"></div>
<span class="t s14" style="left:359.85px;top:245.75px;transform:scaleX(0.7705)">0,0000</span>
<span class="t s12_5" style="left:29.40px;top:272.17px;transform:scaleX(0.8503)">Último Vl.praticado como BS ICMS/ST cheio</span>
<div class="bx" style="left:26px;top:287px;width:367px;height:18px;background:#fff;border-color:#7a7a7a"></div>
<span class="t s14" style="left:359.85px;top:287.75px;transform:scaleX(0.7705)">0,0000</span>
<span class="t s12_5" style="left:29.40px;top:314.17px;transform:scaleX(0.8401)">Última alíquota interna praticada para ICMS-ST</span>
<div class="bx" style="left:26px;top:329px;width:367px;height:18px;background:#fff;border-color:#7a7a7a"></div>
<span class="t s14" style="left:359.85px;top:329.75px;transform:scaleX(0.7705)">0,0000</span>
<span class="t s12_5" style="left:29.40px;top:356.17px;transform:scaleX(0.8358)">Última Base de Cálculo FCP praticada para ICMS-ST</span>
<div class="bx" style="left:26px;top:371px;width:367px;height:18px;background:#fff;border-color:#7a7a7a"></div>
<span class="t s14" style="left:359.85px;top:371.75px;transform:scaleX(0.7705)">0,0000</span>
<span class="t s12_5" style="left:29.40px;top:398.17px;transform:scaleX(0.8381)">Último Percentual do FCP praticado para ICMS-ST</span>
<div class="bx" style="left:26px;top:413px;width:367px;height:18px;background:#fff;border-color:#7a7a7a"></div>
<span class="t s14" style="left:359.85px;top:413.75px;transform:scaleX(0.7705)">0,0000</span>
<span class="t s12_5" style="left:29.40px;top:440.17px;transform:scaleX(0.8346)">Último Valor do FCP praticado para ICMS-ST</span>
<div class="bx" style="left:26px;top:455px;width:367px;height:18px;background:#fff;border-color:#7a7a7a"></div>
<span class="t s14" style="left:359.85px;top:455.75px;transform:scaleX(0.7705)">0,0000</span>
<span class="t s12_5" style="left:29.40px;top:482.17px;transform:scaleX(0.8367)">Último vl. praticado do ICMS próprio do substituto</span>
<div class="bx" style="left:26px;top:497px;width:367px;height:18px;background:#fff;border-color:#7a7a7a"></div>
<span class="t s14" style="left:359.85px;top:497.75px;transform:scaleX(0.7705)">0,0000</span>
<div class="gb" style="left:14px;top:539px;width:388px;height:71px"></div>
<div class="gt" style="left:21.1px;top:537px;width:190.1px"></div>
<span class="t s12_5" style="left:22.00px;top:532.97px;transform:scaleX(0.8516)">Configurações adicionais para retenção</span>
<div class="cb" style="left:26px;top:556px"></div>
<span class="t s12_5" style="left:42.60px;top:554.67px;transform:scaleX(0.8594)">IR retido na fonte?</span>
<div class="cb" style="left:26px;top:584px"></div>
<span class="t s12_5" style="left:42.60px;top:582.67px;transform:scaleX(0.8516)">PIS retido na fonte?</span>
<div class="cb" style="left:214px;top:556px"></div>
<span class="t s12_5" style="left:230.10px;top:554.67px;transform:scaleX(0.8526)">COFINS retido na fonte?</span>
<div class="cb" style="left:214px;top:584px"></div>
<span class="t s12_5" style="left:230.10px;top:582.67px;transform:scaleX(0.8625)">CSLL retido na fonte?</span>
<div class="gb" style="left:408px;top:180px;width:601px;height:96px"></div>
<div class="gt" style="left:414.75px;top:178px;width:152.25px"></div>
<span class="t s12_5" style="left:415.65px;top:173.97px;transform:scaleX(0.8518)">Configurações adicionais de IPI</span>
<span class="t s12_5" style="left:417.40px;top:188.17px;transform:scaleX(0.8476)">Enquadramento Legal para Suspensão do IPI</span>
<span class="t s12_5" style="left:803.65px;top:188.17px;transform:scaleX(0.8437)">Alq. IPI para consulta</span>
<div class="bx" style="left:415px;top:203px;width:78px;height:18px;background:#ffffb9;border-color:#7a7a7a"></div>
<div class="bx" style="left:497px;top:203px;width:295px;height:18px;background:#ffffb9;border-color:#7a7a7a"></div>
<div class="bx" style="left:801px;top:203px;width:197px;height:18px;background:#ffffe1;border-color:#7a7a7a"></div>
<span class="t s14" style="left:965.10px;top:203.75px;transform:scaleX(0.7705)">0,0000</span>
<span class="t s12_5" style="left:416.90px;top:230.17px;transform:scaleX(0.8509)">CST de Entrada para Suspensão do IPI</span>
<span class="t s12_5" style="left:674.90px;top:230.17px;transform:scaleX(0.8603)">CST de Saída para Suspensão do IPI</span>
<div class="bx" style="left:415px;top:245px;width:78px;height:18px;background:#ffffb9;border-color:#7a7a7a"></div>
<div class="bx" style="left:497px;top:245px;width:142px;height:18px;background:#ffffb9;border-color:#7a7a7a"></div>
<svg class="ic" style="left:643px;top:250px" width="13" height="13" viewBox="0 0 13 13"><defs><linearGradient id="bag" x1="0" y1="0" x2="1" y2="0.3"><stop offset="0" stop-color="#2a55e6"/><stop offset="0.45" stop-color="#1c8ae8"/><stop offset="1" stop-color="#19b0f2"/></linearGradient></defs>
<path d="M0.7 3.5 H6.4 V0.9 L12 6.1 L6.4 11.5 V8.8 H0.7 Z" fill="url(#bag)" stroke="#1a22cc" stroke-width="1" stroke-linejoin="round"/>
<path d="M6.9 2.2 L11.2 6.1" stroke="#55b8f6" stroke-width="1" fill="none"/></svg>
<div class="bx" style="left:673px;top:245px;width:78px;height:18px;background:#ffffb9;border-color:#7a7a7a"></div>
<div class="bx" style="left:755px;top:245px;width:224px;height:18px;background:#ffffb9;border-color:#7a7a7a"></div>
<svg class="ic" style="left:982px;top:250px" width="13" height="13" viewBox="0 0 13 13"><defs><linearGradient id="bag" x1="0" y1="0" x2="1" y2="0.3"><stop offset="0" stop-color="#2a55e6"/><stop offset="0.45" stop-color="#1c8ae8"/><stop offset="1" stop-color="#19b0f2"/></linearGradient></defs>
<path d="M0.7 3.5 H6.4 V0.9 L12 6.1 L6.4 11.5 V8.8 H0.7 Z" fill="url(#bag)" stroke="#1a22cc" stroke-width="1" stroke-linejoin="round"/>
<path d="M6.9 2.2 L11.2 6.1" stroke="#55b8f6" stroke-width="1" fill="none"/></svg>
<div class="gb" style="left:408px;top:289px;width:601px;height:166px"></div>
<div class="gt" style="left:414.75px;top:287px;width:171.0px"></div>
<span class="t s12_5" style="left:415.65px;top:283.17px;transform:scaleX(0.8449)">Configurações adicionais para NF-e</span>
<div class="cb" style="left:415px;top:311px"><svg width="9" height="9" viewBox="0 0 9 9"><path d="M1.2 4.9 L3.4 7.3 L7.8 2.3" fill="none" stroke="#000" stroke-width="1.9"/></svg></div>
<span class="t s12_5" style="left:431.90px;top:309.67px;transform:scaleX(0.8528)">Revenda suj. a tributação monofásica PIS/COFINS</span>
<span class="t s12_5" style="left:416.80px;top:326.67px;transform:scaleX(0.8530)">Código ANP</span>
<span class="t s12_5" style="left:561.40px;top:326.67px;transform:scaleX(0.8551)">Descrição do produto conforme ANP</span>
<div class="bx" style="left:415px;top:342px;width:135px;height:18px;background:#fff;border-color:#7a7a7a"></div>
<div class="bx" style="left:558px;top:342px;width:441px;height:18px;background:#fff;border-color:#7a7a7a"></div>
<span class="t s14" style="left:416.40px;top:342.55px;transform:scaleX(0.7777)">320102002</span>
<span class="t s14" style="left:559.40px;top:342.55px;transform:scaleX(0.7758)">GASOLINA C ADITIVADA</span>
<span class="t s12_5" style="left:417.40px;top:368.67px;transform:scaleX(0.8472)">Alq. Ad Rem do ICMS</span>
<span class="t s12_5" style="left:560.65px;top:368.67px;transform:scaleX(0.8411)">% GLP derivado do</span>
<span class="t s12_5" style="left:704.90px;top:368.67px;transform:scaleX(0.8377)">% Gás Natural Nacional</span>
<span class="t s12_5" style="left:864.90px;top:368.67px;transform:scaleX(0.8277)">% Gás Natural Importado</span>
<div class="bx" style="left:415px;top:384px;width:135px;height:18px;background:#fff;border-color:#7a7a7a"></div>
<div class="bx" style="left:558px;top:384px;width:136px;height:18px;background:#fff;border-color:#7a7a7a"></div>
<div class="bx" style="left:702px;top:384px;width:153px;height:18px;background:#fff;border-color:#7a7a7a"></div>
<div class="bx" style="left:862px;top:384px;width:136px;height:18px;background:#fff;border-color:#7a7a7a"></div>
<span class="t s14" style="left:517.60px;top:384.55px;transform:scaleX(0.7588)">1,5700</span>
<span class="t s14" style="left:660.85px;top:384.55px;transform:scaleX(0.7705)">0,0000</span>
<span class="t s14" style="left:821.35px;top:384.55px;transform:scaleX(0.7705)">0,0000</span>
<span class="t s14" style="left:965.10px;top:384.55px;transform:scaleX(0.7705)">0,0000</span>
<span class="t s12_5" style="left:417.40px;top:414.67px;transform:scaleX(0.8729)">Vl.conversão de unidade p/</span>
<span class="t s12_5" style="left:659.90px;top:414.67px;transform:scaleX(0.8538)">Código do produto no fabricante</span>
<div class="bx" style="left:415px;top:430px;width:234px;height:18px;background:#fff;border-color:#7a7a7a"></div>
<div class="bx" style="left:658px;top:430px;width:340px;height:18px;background:#fff;border-color:#7a7a7a"></div>
<span class="t s14" style="left:544.10px;top:430.55px;transform:scaleX(0.7687)">0,0000000000000000</span>
<div class="gb" style="left:408px;top:466px;width:601px;height:31px"></div>
<div class="gt" style="left:414.75px;top:464px;width:177.75px"></div>
<span class="t s12_5" style="left:415.65px;top:459.97px;transform:scaleX(0.8520)">Configurações adicionais para venda</span>
<div class="cb" style="left:415px;top:480px"></div>
<span class="t s12_5" style="left:431.40px;top:478.67px;transform:scaleX(0.8521)">Zera Preço de Venda quando em Opcionais</span>
<div class="gb" style="left:408px;top:510px;width:601px;height:100px"></div>
<div class="gt" style="left:415.5px;top:508px;width:19.0px"></div>
<span class="t s12_5" style="left:416.40px;top:504.37px;transform:scaleX(0.8192)">FCI</span>
<span class="t s12_5" style="left:417.40px;top:520.67px;transform:scaleX(0.8309)">Número da FCI</span>
<div class="bx" style="left:415px;top:536px;width:234px;height:18px;background:#fff;border-color:#7a7a7a"></div>
<div class="cb" style="left:667px;top:543px"></div>
<span class="t s12_5" style="left:683.90px;top:541.67px;transform:scaleX(0.8497)">Produto excluído da legislação de FCI</span>
<span class="t s12_5" style="left:417.40px;top:562.67px;transform:scaleX(0.8492)">Valor da Parcela de Importação</span>
<span class="t s12_5" style="left:669.90px;top:562.67px;transform:scaleX(0.8464)">Porcentagem de Importação</span>
<span class="t s12_5" style="left:843.65px;top:562.67px;transform:scaleX(0.8426)">Valor estimado de venda para</span>
<div class="bx" style="left:415px;top:578px;width:234px;height:18px;background:#fff;border-color:#7a7a7a"></div>
<div class="bx" style="left:667px;top:578px;width:166px;height:18px;background:#fff;border-color:#7a7a7a"></div>
<div class="bx" style="left:840px;top:578px;width:158px;height:18px;background:#fff;border-color:#7a7a7a"></div>
<span class="t s14" style="left:615.85px;top:578.65px;transform:scaleX(0.7705)">0,0000</span>
<span class="t s14" style="left:799.60px;top:578.65px;transform:scaleX(0.7705)">0,0000</span>
<span class="t s14" style="left:965.10px;top:578.65px;transform:scaleX(0.7705)">0,0000</span>
<div id="status"></div>
<div class="sep" style="left:872px;top:617px;height:19px;background:#9c9c9c"></div>
<svg class="ic" style="left:877px;top:618px" width="17" height="16" viewBox="0 0 17 16"><rect x="0.75" y="0.75" width="15.1" height="13.8" rx="1.6" fill="#fdfdfd" stroke="#3858cc" stroke-width="1.4"/><rect x="1.4" y="1" width="13.8" height="1.7" fill="#18a6e0"/><path d="M1.6 14.4 H15" stroke="#1c38b8" stroke-width="1.5"/><path d="M2.4 4.5 H5 M6.4 4.5 H9 M10.4 4.5 H13" stroke="#2a2a2a" stroke-width="1.2" stroke-linecap="round"/><path d="M2.4 6.5 H5 M6.4 6.5 H9 M10.4 6.5 H13" stroke="#3a3a3a" stroke-width="1.2" stroke-linecap="round"/><path d="M2.4 8.5 H5 M6.4 8.5 H9 M10.4 8.5 H13" stroke="#3f9a98" stroke-width="1.2" stroke-linecap="round"/><path d="M2.4 10.5 H5 M6.4 10.5 H9 M10.4 10.5 H13" stroke="#9a9a9a" stroke-width="1.2" stroke-linecap="round"/><path d="M2.4 12.3 H5 M6.4 12.3 H9 M10.4 12.3 H13" stroke="#b4b4a8" stroke-width="1.2" stroke-linecap="round"/></svg>
<svg class="ic" style="left:899px;top:618px" width="17" height="16" viewBox="0 0 17 16"><rect x="0.75" y="0.75" width="15.1" height="13.8" rx="1.6" fill="#fdfdfd" stroke="#3858cc" stroke-width="1.4"/><rect x="1.4" y="1" width="13.8" height="1.7" fill="#18a6e0"/><path d="M1.6 14.4 H15" stroke="#1c38b8" stroke-width="1.5"/>
<rect x="1.8" y="3.8" width="13" height="2.9" fill="#e2e2e2"/><rect x="1.8" y="10.2" width="13" height="2.5" fill="#e2e2e2"/>
<path d="M1.2 8.5 H15.4" stroke="#2444cc" stroke-width="1.3" stroke-dasharray="1.3 0.7"/></svg>
<div id="stsel"></div>
<svg class="ic" style="left:921px;top:618px" width="17" height="16" viewBox="0 0 17 16"><rect x="0.75" y="0.75" width="15.1" height="13.8" rx="1.6" fill="#fdfdfd" stroke="#3858cc" stroke-width="1.4"/><rect x="1.4" y="1" width="13.8" height="1.7" fill="#18a6e0"/><path d="M1.6 14.4 H15" stroke="#1c38b8" stroke-width="1.5"/>
<rect x="1.6" y="3" width="13.4" height="10.6" fill="#ececec"/>
<path d="M3.4 6.4 H6.4 M3.4 10.5 H6.4" stroke="#8e8e8e" stroke-width="1.3"/>
<rect x="7.4" y="5.1" width="5.8" height="2.6" fill="#fff" stroke="#b0b0b0" stroke-width="0.8"/>
<rect x="7.4" y="9.2" width="5.8" height="2.6" fill="#fff" stroke="#b0b0b0" stroke-width="0.8"/></svg>
<div class="sep" style="left:942px;top:617px;height:19px;background:#9c9c9c"></div>
<svg class="ic" style="left:948px;top:617px" width="17" height="18" viewBox="0 0 17 18"><circle cx="8.1" cy="9.1" r="4.5" fill="none" stroke="#7c7c7c" stroke-width="1.9"/><path d="M8.10 14.30 L8.10 17.00 M4.42 12.78 L2.51 14.69 M2.90 9.10 L0.20 9.10 M4.42 5.42 L2.51 3.51 M8.10 3.90 L8.10 1.20 M11.78 5.42 L13.69 3.51 M13.30 9.10 L16.00 9.10 M11.78 12.78 L13.69 14.69 " stroke="#7c7c7c" stroke-width="2.1" fill="none"/></svg>
<svg class="ic" style="left:968px;top:624px" width="7" height="4" viewBox="0 0 7 4"><path d="M0.2 0 H6 L3.1 3.1 Z" fill="#000"/></svg>
<svg class="ic" style="left:980px;top:618px" width="17" height="17" viewBox="0 0 17 17"><circle cx="8.2" cy="8.2" r="7.2" fill="none" stroke="#858585" stroke-width="1.4"/>
<circle cx="8.4" cy="3.8" r="1.15" fill="#1c58c8"/>
<path d="M8.4 6.2 V13.2" stroke="#1c58c8" stroke-width="2.3"/></svg>
<svg class="ic" style="left:1004px;top:624px" width="12" height="12" viewBox="0 0 12 12"><path d="M8 0 h2 v2 h-2z M4 4 h2 v2 h-2z M8 4 h2 v2 h-2z M0 8 h2 v2 h-2z M4 8 h2 v2 h-2z M8 8 h2 v2 h-2z" fill="#a9b1ba"/>
<path d="M9 1 h2 v2 h-2z M5 5 h2 v2 h-2z M9 5 h2 v2 h-2z M1 9 h2 v2 h-2z M5 9 h2 v2 h-2z M9 9 h2 v2 h-2z" fill="#fdfdfd"/></svg>
</div></body></html>
